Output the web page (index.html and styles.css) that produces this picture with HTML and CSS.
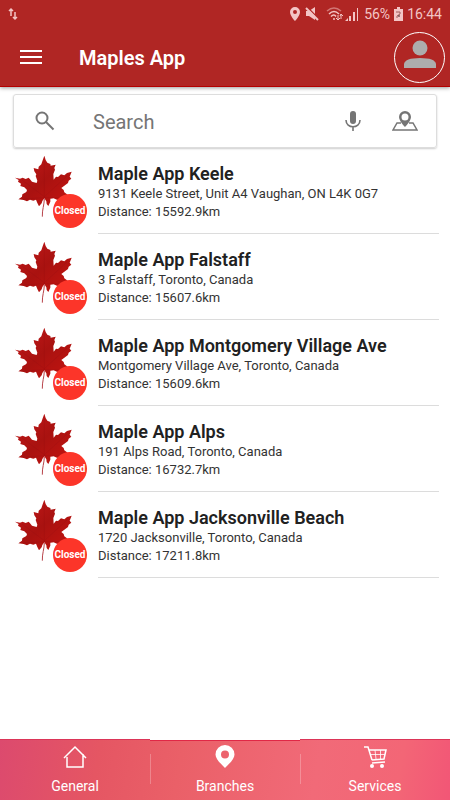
FILE: index.html
```html
<!DOCTYPE html>
<html lang="en">
<head>
<meta charset="utf-8">
<meta name="viewport" content="width=device-width, initial-scale=1">
<title>Maples App</title>
<link rel="stylesheet" href="styles.css">
</head>
<body>
<svg width="0" height="0" class="defs" aria-hidden="true">
  <defs>
    <linearGradient id="leafFill" x1="0" y1="0" x2="1" y2="1">
      <stop offset="0" stop-color="#c4181a"/>
      <stop offset=".5" stop-color="#a91210"/>
      <stop offset="1" stop-color="#c41410"/>
    </linearGradient>
    <symbol id="leaf" viewBox="6 9 180 192">
      <path fill="url(#leafFill)" d="M97 14L101 27L106 35L115 39L116 44L131 41L127 51L129 56L124 69L125 86L132 77L138 78L147 70L157 73L165 66L179 62L173 77L178 83L170 89L168 96L156 105L148 111L155 117L157 124L165 130L167 136L177 142L160 143L153 149L142 144L136 147L125 142L115 143L115 152L109 165L104 159L103 151L97 142L91 150L89 157L81 166L76 156L72 146L64 149L54 146L45 151L35 147L19 145L30 137L31 130L43 123L45 117L37 109L25 105L27 98L18 92L20 87L9 80L24 83L32 80L41 84L50 80L54 85L60 92L74 96L76 89L71 75L73 70L67 61L65 51L79 55L80 47L88 40L92 28Z"/>
      <path fill="none" stroke="#850c0f" stroke-width="1.5" opacity=".35" d="M97 30v110M97 137L30 87M97 137l68-62M97 140l-60 4M97 140l62 1"/>
      <path fill="none" stroke="#b8434a" stroke-width="3" d="M97 143c0 18-7 34-6 54"/>
    </symbol>
  </defs>
</svg>
<div class="app">
  <header class="header">
    <div class="status">
      <svg class="transfer" width="10" height="14" viewBox="0 0 10 14" fill="none" stroke="#f3c5c5" stroke-width="1.5"><path d="M3 9V2M1 4l2-2 2 2M7 5v7M5 10l2 2 2-2"/></svg>
      <svg class="status-pin" width="12" height="14" viewBox="0 0 12 14"><path fill="#f3c5c5" fill-rule="evenodd" d="M6 0a5 5 0 0 1 5 5c0 4-5 9-5 9S1 9 1 5a5 5 0 0 1 5-5zm0 3a2 2 0 1 0 0 4 2 2 0 0 0 0-4z"/></svg>
      <svg class="mute" width="14" height="14" viewBox="0 0 14 14"><path fill="#f3c5c5" d="M1 4h3l6-4v13l-6-4H1z"/><path d="M2 0l12 12" stroke="#b02624" stroke-width="1.500"/><path d="M1 1l12 12" stroke="#f3c5c5" stroke-width="2"/></svg>
      <svg class="wifi" width="17" height="14" viewBox="0 0 17 14" fill="none" stroke="#f3c5c5" stroke-width="1.5"><path d="M1 4q7-6 14 0" opacity=".5"/><path d="M3 7q5-5 10 0M5 9.500q3-3 5 0"/><circle cx="8" cy="12" r="1" fill="#f3c5c5" stroke="none"/><path stroke-width="1" d="M12 13V8m-2 3l2 2 2-2M15 12V7m-1 2l1-2 2 2"/></svg>
      <svg class="signal" width="14" height="14" viewBox="0 0 14 14" fill="#f3c5c5"><path d="M0 14l3-3v3zM4 9h2v5H4zM8 5h2v9H8zM12 1h1v13h-1z"/></svg>
      <span class="battery-text">56%</span>
      <svg class="battery" width="9" height="14" viewBox="0 0 9 14"><path fill="#f3c5c5" d="M3 0h3v2h3v12H0V2h3z"/><path d="M2 5h4v2L3 9v2" fill="none" stroke="#a05a5a"/><path d="M4 9h2" stroke="#3a2525"/></svg>
      <time>16:44</time>
    </div>
    <div class="toolbar">
      <button class="icon-button menu" aria-label="Menu"><svg width="22" height="16" viewBox="0 0 22 16"><path d="M0 2h22M0 8h22M0 14h22" stroke="#fff" stroke-width="2"/></svg></button>
      <h1>Maples App</h1>
      <button class="avatar" aria-label="Profile"><svg width="32" height="30" viewBox="0 0 32 30" fill="#adadad"><circle cx="16" cy="8" r="7.500"/><path d="M0 28v-4q1-6 16-6t16 6v4z"/></svg></button>
    </div>
  </header>
  <main>
    <form class="search" role="search">
      <label for="query" aria-label="Search"><svg width="20" height="20" viewBox="0 0 20 20" fill="none" stroke="#757575" stroke-width="2"><circle cx="7" cy="7" r="5.500"/><path d="M11 11l7.500 7.500"/></svg></label>
      <input id="query" type="search" placeholder="Search">
      <button class="icon-button" type="button" aria-label="Voice search"><svg width="16" height="22" viewBox="0 0 16 22"><rect x="5" y="1" width="6" height="13" rx="3" fill="#757575"/><path d="M1 10c0 9 14 9 14 0M8 16v5" fill="none" stroke="#757575" stroke-width="1.600"/></svg></button>
      <button class="icon-button" type="button" aria-label="Map"><svg width="26" height="22" viewBox="0 0 26 22"><path fill="#757575" fill-rule="evenodd" d="M13 1a6 6 0 0 1 6 6c0 4-6 10-6 10S7 11 7 7a6 6 0 0 1 6-6zm0 2.500a3.500 3.500 0 1 0 0 7 3.500 3.500 0 0 0 0-7z"/><path d="M9 13H5l-4 7h24l-4-7h-4" fill="none" stroke="#757575" stroke-width="1.500"/></svg></button>
    </form>
    <ul class="branches">
      <li><div class="logo"><svg width="60" height="64"><use href="#leaf"/></svg><span class="badge">Closed</span></div><div class="details"><h2>Maple App Keele</h2><p>9131 Keele Street, Unit A4 Vaughan, ON L4K 0G7</p><p>Distance: 15592.9km</p></div></li>
      <li><div class="logo"><svg width="60" height="64"><use href="#leaf"/></svg><span class="badge">Closed</span></div><div class="details"><h2>Maple App Falstaff</h2><p>3 Falstaff, Toronto, Canada</p><p>Distance: 15607.6km</p></div></li>
      <li><div class="logo"><svg width="60" height="64"><use href="#leaf"/></svg><span class="badge">Closed</span></div><div class="details"><h2>Maple App Montgomery Village Ave</h2><p>Montgomery Village Ave, Toronto, Canada</p><p>Distance: 15609.6km</p></div></li>
      <li><div class="logo"><svg width="60" height="64"><use href="#leaf"/></svg><span class="badge">Closed</span></div><div class="details"><h2>Maple App Alps</h2><p>191 Alps Road, Toronto, Canada</p><p>Distance: 16732.7km</p></div></li>
      <li><div class="logo"><svg width="60" height="64"><use href="#leaf"/></svg><span class="badge">Closed</span></div><div class="details"><h2>Maple App Jacksonville Beach</h2><p>1720 Jacksonville, Toronto, Canada</p><p>Distance: 17211.8km</p></div></li>
    </ul>
  </main>
  <nav class="tabs">
    <a href="#general"><svg width="24" height="24" viewBox="0 0 24 24" fill="none" stroke="#fff" stroke-width="1.500"><path d="M1 13L12 2l11 11M4 12v10h16V9"/></svg>General</a>
    <a href="#branches" class="active" aria-current="page"><svg width="20" height="24" viewBox="0 0 20 24"><path fill="#fff" fill-rule="evenodd" d="M10 0a9.500 9.500 0 0 1 9.500 9.500C19.500 14 14 19 10 23 6 19 .5 14 .5 9.500A9.500 9.500 0 0 1 10 0zm0 5.500a4 4 0 1 0 0 8 4 4 0 0 0 0-8z"/></svg>Branches</a>
    <a href="#services"><svg width="24" height="24" viewBox="0 0 24 24" fill="none" stroke="#fff" stroke-width="1.500"><path d="M1 2h4l4 13M6 5h17l-2 9-12 1M22 17l-13 1"/><path stroke-width="1" opacity=".8" d="M7 9.500h15M12 5l1 9M17.500 5v9"/><circle cx="9" cy="21" r="2" fill="#fff" stroke="none"/><circle cx="19" cy="21" r="2" fill="#fff" stroke="none"/></svg>Services</a>
  </nav>
</div>
</body>
</html>
```
FILE: styles.css
```css
* { box-sizing: border-box; }
body, h1, h2, p, ul { margin: 0; padding: 0; }
body { background: #fff; font-family: Roboto, sans-serif; color: #212121; }
svg { display: block; flex: none; }
.defs { position: absolute; }
button { padding: 0; border: 0; background: none; cursor: pointer; }

.app { display: flex; flex-direction: column; min-height: 100vh; }

.header {
  background: #b02624;
  color: #fff;
  border-bottom: 1px solid #b40000;
  box-shadow: 0 1px 4px rgba(0, 0, 0, 0.4);
}
.status {
  display: flex;
  align-items: center;
  height: 28px;
  padding: 0 8px;
  color: #f3c5c5;
  font-size: 14px;
}
.transfer { margin-right: auto; }
.mute { margin-left: 4px; }
.wifi { margin-left: 7px; }
.signal { margin-left: 2px; }
.battery-text { margin-left: 5px; }
.battery { margin: 0 4px; }
.toolbar {
  display: flex;
  align-items: center;
  height: 58px;
  padding: 0 5px 0 20px;
}
.toolbar h1 {
  flex: 1;
  margin-left: 37px;
  padding-top: 2px;
  font-size: 20px;
  font-weight: 600;
  line-height: 24px;
}
.icon-button { display: flex; align-items: center; justify-content: center; }
.avatar {
  display: flex;
  justify-content: center;
  width: 51px;
  height: 51px;
  padding-top: 7px;
  border: 1px solid #fff;
  border-radius: 50%;
}

main { flex: 1; }
.search {
  display: flex;
  align-items: center;
  height: 54px;
  margin: 7px 13px 0;
  padding: 0 18px 0 21px;
  border: 1px solid #ddd;
  border-radius: 3px;
  box-shadow: 0 1px 2px rgba(0, 0, 0, 0.2);
}
.search input {
  flex: 1;
  min-width: 0;
  margin-left: 38px;
  padding: 2px 0 0;
  border: 0;
  outline: 0;
  background: none;
  font: 20px/24px Roboto, sans-serif;
  color: #212121;
}
.search input::placeholder { color: #757575; opacity: 1; }
.search .icon-button + .icon-button { margin-left: 31px; }

.branches { list-style: none; padding: 0 11px 0 14px; }
.branches li { display: flex; height: 86px; }
.logo { position: relative; flex: none; width: 74px; margin: 6px 10px 0 0; }
.badge {
  position: absolute;
  left: 39px;
  top: 40px;
  width: 34px;
  height: 34px;
  border-radius: 50%;
  background: #fc3529;
  color: #fff;
  font-size: 10px;
  font-weight: 700;
  line-height: 34px;
  text-align: center;
}
.details { flex: 1; min-width: 0; padding-top: 15px; border-bottom: 1px solid #dcdcdc; }
.details h2 { font-size: 18px; font-weight: 600; line-height: 22px; }
.details p { font-size: 13px; line-height: 18px; color: #333; }

.tabs {
  display: flex;
  background: linear-gradient(100deg, #dc4a6e 0%, #e55663 22%, #ea6068 40%, #f16a78 70%, #f36676 88%, #f25676 100%);
}
.tabs a {
  position: relative;
  flex: 1;
  display: flex;
  flex-direction: column;
  align-items: center;
  gap: 8px;
  height: 61px;
  padding-top: 5px;
  border-top: 1px solid #dc3558;
  color: #fff;
  font-size: 14px;
  line-height: 18px;
  text-decoration: none;
}
.tabs .active { border-top-color: #fff; box-shadow: inset 0 1px #e02846; }
.tabs a + a::before {
  content: "";
  position: absolute;
  left: 0;
  top: 14px;
  width: 1px;
  height: 30px;
  background: rgba(255, 255, 255, 0.25);
}
```
